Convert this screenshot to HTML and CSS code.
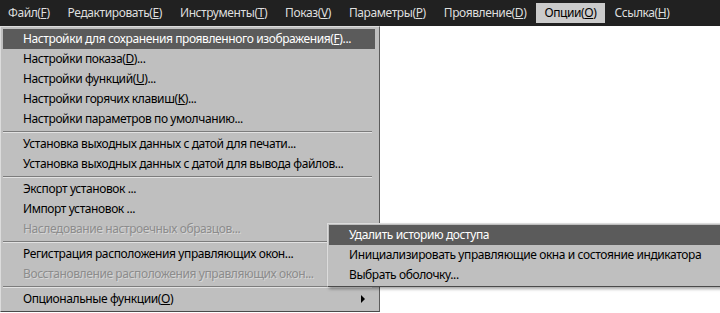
FILE: index.html
```html
<!DOCTYPE html>
<html lang="ru">
<head>
    <meta charset="UTF-8">
    <title>Опции</title>
    <link rel="stylesheet" href="styles.css">
</head>
<body>
    <div class="menubar">
        <span class="menu-title">Файл(<u>F</u>)</span>
        <span class="menu-title">Редактировать(<u>E</u>)</span>
        <span class="menu-title">Инструменты(<u>T</u>)</span>
        <span class="menu-title">Показ(<u>V</u>)</span>
        <span class="menu-title">Параметры(<u>P</u>)</span>
        <span class="menu-title">Проявление(<u>D</u>)</span>
        <span class="menu-title open">Опции(<u>O</u>)</span>
        <span class="menu-title">Ссылка(<u>H</u>)</span>
    </div>

    <div class="workspace">
        <div class="dropdown">
            <div class="item active">Настройки для сохранения проявленного изображения(<u>F</u>)...</div>
            <div class="item">Настройки показа(<u>D</u>)...</div>
            <div class="item">Настройки функций(<u>U</u>)...</div>
            <div class="item">Настройки горячих клавиш(<u>K</u>)...</div>
            <div class="item">Настройки параметров по умолчанию...</div>
            <div class="separator"></div>
            <div class="item">Установка выходных данных с датой для печати...</div>
            <div class="item">Установка выходных данных с датой для вывода файлов...</div>
            <div class="separator"></div>
            <div class="item">Экспорт установок ...</div>
            <div class="item">Импорт установок ...</div>
            <div class="item disabled">Наследование настроечных образцов...</div>
            <div class="separator"></div>
            <div class="item">Регистрация расположения управляющих окон...</div>
            <div class="item disabled">Восстановление расположения управляющих окон...</div>
            <div class="separator"></div>
            <div class="item has-sub">Опциональные функции(<u>O</u>)<span class="arrow"></span></div>
        </div>

        <div class="submenu">
            <div class="item active">Удалить историю доступа</div>
            <div class="item">Инициализировать управляющие окна и состояние индикатора</div>
            <div class="item">Выбрать оболочку...</div>
        </div>
    </div>
</body>
</html>
```

FILE: styles.css
```css
html, body {
    margin: 0;
    height: 100%;
    overflow: hidden;
}
body {
    font-family: "Noto Sans", "Open Sans", sans-serif;
    font-size: 12px;
    letter-spacing: -0.4px;
    background: #ffffff;
    color: #000;
}
.menubar {
    display: flex;
    gap: 1px;
    height: 26px;
    align-items: center;
    background: #212121;
    color: #dedede;
}
.menu-title {
    padding: 0 9px 0 8px;
    height: 20px;
    line-height: 20px;
    white-space: nowrap;
}
.menu-title.open {
    background: #cbcbcb;
    color: #000;
}
.workspace {
    position: relative;
    height: calc(100% - 26px);
}
.dropdown {
    position: absolute;
    left: 0;
    top: 0;
    width: 372px;
    padding: 2px 4px 2px 2px;
    background: #bfbfbf;
    border: 1px solid;
    border-color: #dcdcdc #5c5c5c #4a4a4a #dcdcdc;
}
.item {
    position: relative;
    height: 20px;
    line-height: 20px;
    padding-left: 20px;
    white-space: nowrap;
}
.item.active {
    background: #5b5b5b;
    color: #fff;
}
.item.disabled {
    color: #8c8c8c;
    text-shadow: 1px 1px 0 #d6d6d6;
}
.separator {
    height: 5px;
    margin-right: 3px;
    background: linear-gradient(#bfbfbf 2px, #7c7c7c 2px, #7c7c7c 3px, #e2e2e2 3px, #e2e2e2 4px, #bfbfbf 4px);
}
.arrow {
    position: absolute;
    right: 10px;
    top: 6px;
    width: 0;
    height: 0;
    border-top: 4px solid transparent;
    border-bottom: 4px solid transparent;
    border-left: 4px solid #000;
}
.submenu {
    position: absolute;
    left: 327px;
    top: 197px;
    width: 420px;
    padding: 1px;
    background: #bfbfbf;
    border: 1px solid;
    border-color: #dcdcdc #5c5c5c #4a4a4a #dcdcdc;
    box-shadow: 2px 2px 3px rgba(0, 0, 0, 0.35);
}
```
